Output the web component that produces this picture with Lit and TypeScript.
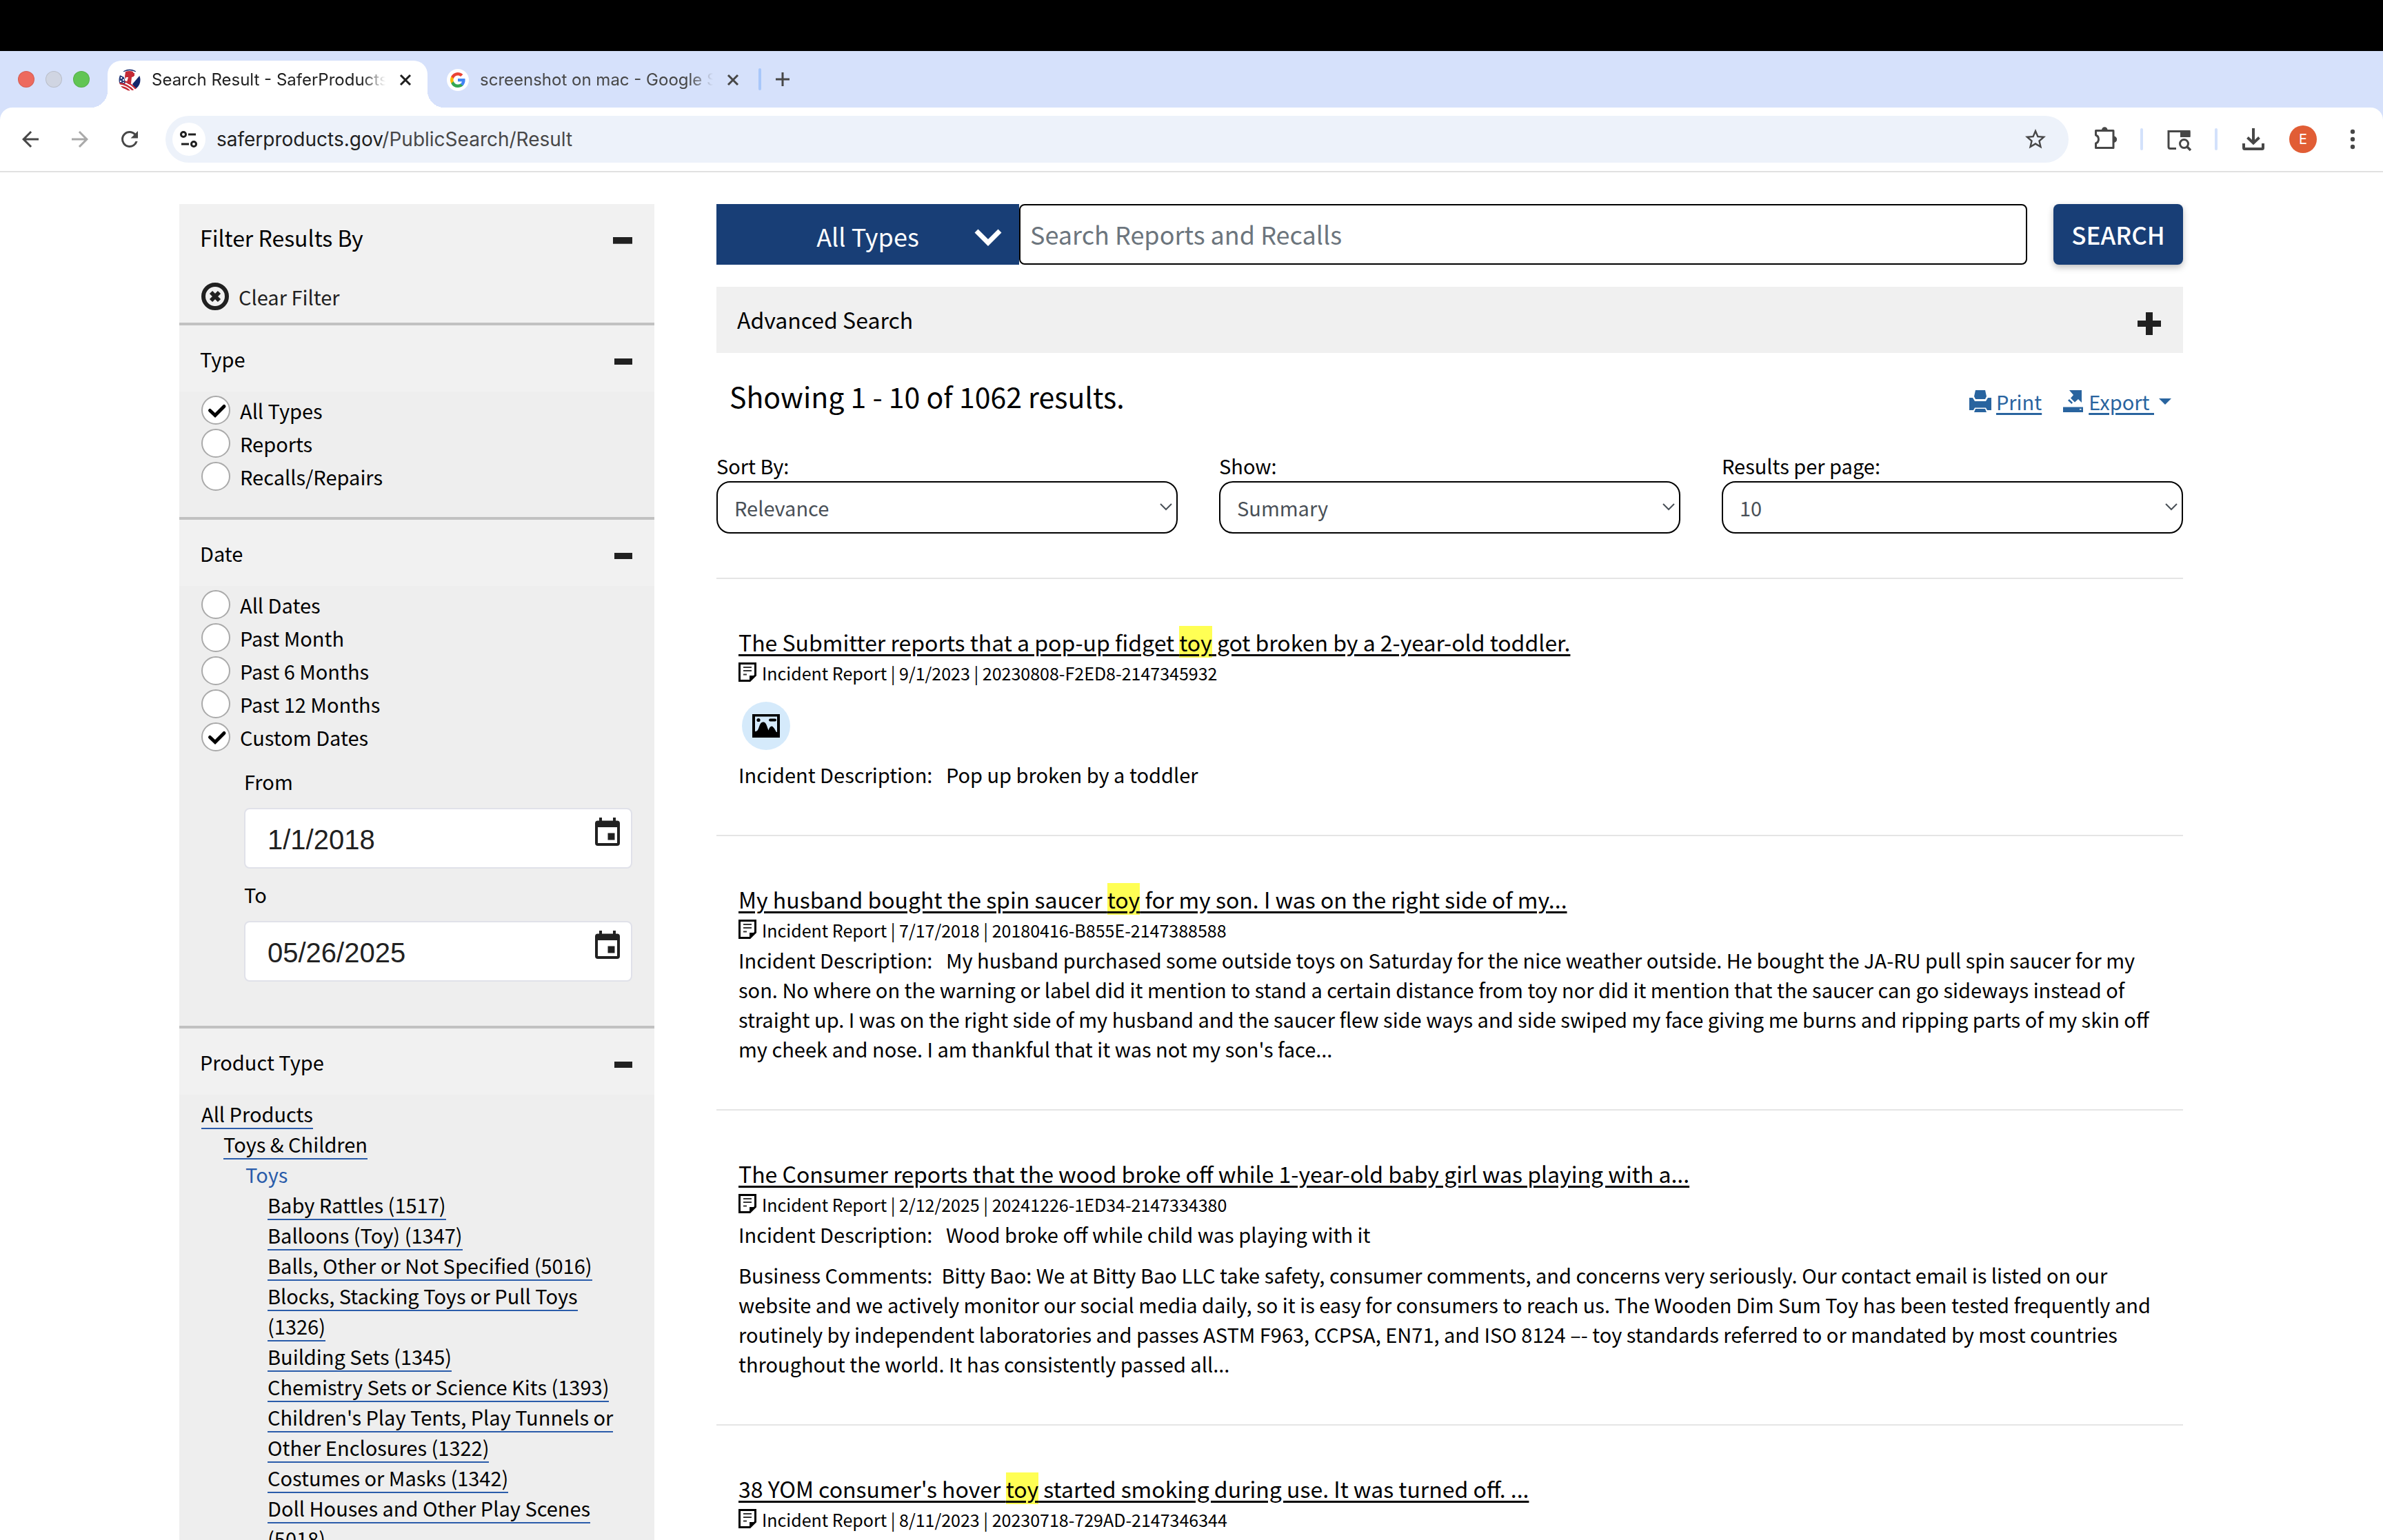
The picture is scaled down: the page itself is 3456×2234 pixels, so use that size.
import { LitElement, html, css, nothing } from "lit";
import { customElement, property, state } from "lit/decorators.js";

const FONT = css`"Noto Sans CJK JP", "Noto Sans CJK SC", "Noto Sans", sans-serif`;

const closeIcon = html`<svg class="close" viewBox="0 0 18 18" aria-hidden="true">
  <path d="M2 2l14 14M16 2L2 16" fill="none" stroke="currentColor" stroke-width="3" />
</svg>`;

@customElement("browser-chrome")
export class BrowserChrome extends LitElement {
  static styles = css`
    :host {
      display: block;
      font-family: Inter, Roboto, sans-serif;
      color: #1f1f1f;
    }
    button {
      border: 0;
      padding: 0;
      margin: 0;
      background: none;
      color: inherit;
      font: inherit;
      display: grid;
      place-items: center;
    }
    svg {
      display: block;
    }
    .menubar {
      height: 74px;
      background: #000;
    }
    .strip {
      display: flex;
      align-items: center;
      height: 82px;
      padding-left: 26px;
      background: #d6e1fb;
    }
    .lights {
      display: flex;
      gap: 16px;
      margin-right: 26px;
    }
    .light {
      width: 24px;
      height: 24px;
      border-radius: 50%;
      background: #ed6a5e;
      box-shadow: inset 0 0 0 1px #0000001c;
    }
    .light.min {
      background: #d0d5e2;
    }
    .light.max {
      background: #61c554;
    }
    .tab {
      display: flex;
      align-items: center;
      box-sizing: border-box;
      width: 464px;
      height: 68px;
      padding: 0 23px 12px 16px;
      align-self: flex-end;
      color: #474747;
    }
    .tab.other {
      padding-left: 28px;
      padding-right: 12px;
    }
    .tab.active {
      position: relative;
      background: #fff;
      border-radius: 20px 20px 0 0;
      color: #1f1f1f;
    }
    .tab.active::before,
    .tab.active::after {
      content: "";
      position: absolute;
      bottom: 0;
      width: 24px;
      height: 24px;
    }
    .tab.active::before {
      right: 100%;
      background: radial-gradient(circle at 0 0, transparent 24px, #fff 24px);
    }
    .tab.active::after {
      left: 100%;
      background: radial-gradient(circle at 100% 0, transparent 24px, #fff 24px);
    }
    .fav {
      width: 32px;
      height: 32px;
      flex: none;
      margin-right: 16px;
    }
    .title {
      flex: 1;
      min-width: 0;
      overflow: hidden;
      white-space: nowrap;
      font-size: 24px;
      line-height: 32px;
      margin-right: 20px;
      -webkit-mask-image: linear-gradient(to right, #000 90%, transparent);
      mask-image: linear-gradient(to right, #000 90%, transparent);
    }
    .close {
      width: 18px;
      height: 18px;
    }
    .sep {
      width: 4px;
      height: 32px;
      border-radius: 2px;
      background: #d3e1fb;
    }
    .sep.strong {
      background: #a8c7fa;
      margin: 0 20px 0 16px;
    }
    .plus {
      width: 22px;
      height: 22px;
    }
    .toolbar-back {
      background: #d6e1fb;
    }
    .toolbar {
      display: flex;
      align-items: center;
      gap: 34px;
      height: 92px;
      padding: 0 26px;
      background: #fff;
      border-radius: 18px 18px 0 0;
      border-bottom: 2px solid #e1e1e1;
      color: #474747;
    }
    .nav {
      display: flex;
      gap: 36px;
    }
    .icon {
      width: 36px;
      height: 36px;
    }
    .dim {
      color: #a9a9a9;
    }
    .omni {
      flex: 1;
      display: flex;
      align-items: center;
      height: 68px;
      box-sizing: border-box;
      padding: 0 30px 0 10px;
      border-radius: 34px;
      background: #edf2fa;
    }
    .site {
      width: 48px;
      height: 48px;
      border-radius: 50%;
      background: #fff;
      margin-right: 16px;
      color: #1f1f1f;
    }
    .url {
      flex: 1;
      font-size: 28px;
      line-height: 40px;
      color: #474747;
    }
    .host {
      color: #1f1f1f;
    }
    .avatar {
      width: 40px;
      height: 40px;
      border-radius: 50%;
      background: #e15d35;
      color: #fff;
      font-size: 20px;
    }
  `;

  render() {
    return html`
      <div class="menubar"></div>
      <div class="strip">
        <div class="lights">
          <span class="light"></span><span class="light min"></span><span class="light max"></span>
        </div>
        <div class="tab active">
          <svg class="fav" viewBox="0 0 32 32" aria-hidden="true">
            <clipPath id="seal"><circle cx="16" cy="16" r="15.5" /></clipPath>
            <g clip-path="url(#seal)">
              <path fill="#fff" d="M0 0h32v32H0z" />
              <path fill="#2b3f7c" d="M0 8l8 4 2 8-2 3-8-3z" />
              <path fill="#13276b" d="M20 22l12-14v24h-6z" />
              <path fill="none" stroke="#13276b" stroke-width="1.800" d="M7 3.500Q16-1 25 3.500" />
              <path fill="#c42a36" d="M10 4q6-2 11 0l1 7-3 1-1 9-4 1-2-3 2-7h-3l-1 3-1-4z" />
              <path fill="#c42a36" d="M18 5l5 1v4l-4 1z" />
              <path fill="none" stroke="#c42a36" stroke-width="2.400" d="M1 21q12 1 21 11M3 26q8 1 13 6" />
              <path fill="none" stroke="#c42a36" stroke-width="2.200" d="M9 18q9 3 18 13" />
              <path fill="#fff" d="M3 12h2v2H3zM6 15h2v2H6zM2 17h2v2H2zM6 19h2v1H6z" />
            </g>
          </svg>
          <span class="title">Search Result - SaferProducts.gov</span>
          <button aria-label="Close tab">${closeIcon}</button>
        </div>
        <div class="tab other">
          <svg class="fav" viewBox="0 0 32 32" aria-hidden="true">
            <circle cx="16" cy="16" r="16" fill="#fff" />
            <g transform="translate(4 4)">
              <path fill="#4285F4" d="M22.600 12.200c0-.8-.1-1.500-.2-2.200H12v4.300h5.900a5 5 0 0 1-2.200 3.300v2.800h3.600c2.100-2 3.300-4.800 3.300-8.200z" />
              <path fill="#34A853" d="M12 23c3 0 5.500-1 7.300-2.700l-3.600-2.800c-1 .7-2.200 1.100-3.700 1.100-2.900 0-5.300-1.900-6.200-4.500H2.200v2.800A11 11 0 0 0 12 23z" />
              <path fill="#FBBC05" d="M5.800 14.100a6.600 6.600 0 0 1 0-4.200V7H2.200a11 11 0 0 0 0 9.900z" />
              <path fill="#EA4335" d="M12 5.400c1.600 0 3.100.6 4.200 1.600l3.200-3.100A11 11 0 0 0 2.200 7l3.600 2.900C6.700 7.200 9.100 5.400 12 5.400z" />
            </g>
          </svg>
          <span class="title">screenshot on mac - Google Search</span>
          <button aria-label="Close tab">${closeIcon}</button>
        </div>
        <span class="sep strong"></span>
        <button aria-label="New tab">
          <svg class="plus" viewBox="0 0 22 22"><path d="M11 1v20M1 11h20" stroke="#474747" stroke-width="3" /></svg>
        </button>
      </div>
      <div class="toolbar-back">
        <div class="toolbar">
          <div class="nav">
            <button aria-label="Back">
              <svg class="icon" viewBox="0 0 24 24" fill="currentColor"><path d="M20 11H7.830l5.590-5.590L12 4l-8 8 8 8 1.410-1.410L7.830 13H20z" /></svg>
            </button>
            <button class="dim" aria-label="Forward">
              <svg class="icon" viewBox="0 0 24 24" fill="currentColor"><path d="M12 4l-1.410 1.410L16.170 11H4v2h12.170l-5.580 5.590L12 20l8-8z" /></svg>
            </button>
            <button aria-label="Reload">
              <svg class="icon" viewBox="0 0 24 24" fill="currentColor"><path d="M17.650 6.350A7.950 7.950 0 0 0 12 4a8 8 0 1 0 7.730 10h-2.080A6 6 0 1 1 12 6c1.660 0 3.140.69 4.220 1.780L13 11h7V4z" /></svg>
            </button>
          </div>
          <div class="omni">
            <button class="site" aria-label="Site information">
              <svg width="30" height="30" viewBox="0 0 30 30" fill="none" stroke="currentColor" stroke-width="3">
                <circle cx="7" cy="8" r="3.500" /><path d="M14 8h11M4 22h11" /><circle cx="22" cy="22" r="3.500" />
              </svg>
            </button>
            <span class="url"><span class="host">saferproducts.gov</span>/PublicSearch/Result</span>
            <button aria-label="Bookmark">
              <svg class="icon" viewBox="0 0 24 24" fill="currentColor"><path d="M22 9.240l-7.190-.62L12 2 9.190 8.630 2 9.240l5.460 4.730L5.820 21 12 17.270 18.180 21l-1.630-7.030zM12 15.400l-3.760 2.270 1-4.280-3.320-2.880 4.380-.38L12 6.100l1.710 4.040 4.380.38-3.320 2.880 1 4.280z" /></svg>
            </button>
          </div>
          <button aria-label="Extensions">
            <svg class="icon" viewBox="0 0 36 36">
              <path fill="none" stroke="currentColor" stroke-width="3" stroke-linejoin="round" d="M5.500 5.500H31v25H5.500v-6.500a6.500 6.500 0 0 0 0-12z" />
              <path fill="currentColor" d="M14 4.500a4.300 4.300 0 0 1 8.600 0zM31.500 13.500a4.700 4.700 0 0 1 0 9.400z" />
            </svg>
          </button>
          <span class="sep"></span>
          <button aria-label="Search tabs">
            <svg class="icon" viewBox="0 0 36 36" fill="none" stroke="currentColor" stroke-width="3">
              <path d="M14 31.500H5.500a2.500 2.500 0 0 1-2.500-2.500V6.500h30V14" />
              <path fill="currentColor" stroke="none" d="M20 5h12a2.500 2.500 0 0 1 2.500 2.500V15H20z" />
              <circle cx="25.500" cy="24.500" r="6" /><path d="M30 29l5 5" stroke-width="3.500" />
            </svg>
          </button>
          <span class="sep"></span>
          <button aria-label="Downloads">
            <svg class="icon" viewBox="0 0 36 36" fill="none" stroke="currentColor" stroke-width="4">
              <path d="M18 2v21M9.500 15.500l8.500 8 8.500-8M4 24v6.500a1.500 1.500 0 0 0 1.500 1.500h25a1.500 1.500 0 0 0 1.500-1.500V24" />
            </svg>
          </button>
          <button class="avatar" aria-label="Profile">E</button>
          <button aria-label="Menu">
            <svg class="icon" viewBox="0 0 36 36" fill="currentColor">
              <circle cx="18" cy="7" r="3.200" /><circle cx="18" cy="18" r="3.200" /><circle cx="18" cy="29" r="3.200" />
            </svg>
          </button>
        </div>
      </div>
    `;
  }
}

interface Choice {
  id: string;
  label: string;
}

const TYPES: Choice[] = [
  { id: "all", label: "All Types" },
  { id: "reports", label: "Reports" },
  { id: "recalls", label: "Recalls/Repairs" },
];

const DATES: Choice[] = [
  { id: "all", label: "All Dates" },
  { id: "m1", label: "Past Month" },
  { id: "m6", label: "Past 6 Months" },
  { id: "m12", label: "Past 12 Months" },
  { id: "custom", label: "Custom Dates" },
];

const PRODUCTS = [
  "Baby Rattles (1517)",
  "Balloons (Toy) (1347)",
  "Balls, Other or Not Specified (5016)",
  "Blocks, Stacking Toys or Pull Toys (1326)",
  "Building Sets (1345)",
  "Chemistry Sets or Science Kits (1393)",
  "Children's Play Tents, Play Tunnels or Other Enclosures (1322)",
  "Costumes or Masks (1342)",
  "Doll Houses and Other Play Scenes (5018)",
];

const minusIcon = html`<svg class="minus" viewBox="0 0 26 18" aria-hidden="true">
  <path fill="#212121" d="M0 9h26v9H0z" />
</svg>`;

@customElement("filter-panel")
export class FilterPanel extends LitElement {
  static styles = css`
    :host {
      display: block;
      background: #eee;
      font-family: ${FONT};
      font-size: 29px;
      line-height: 44px;
      color: #000;
    }
    h2,
    h3,
    ul {
      margin: 0;
      padding: 0;
      font: inherit;
      list-style: none;
    }
    button {
      border: 0;
      padding: 0;
      margin: 0;
      background: none;
      color: inherit;
      font: inherit;
    }
    svg {
      display: block;
    }
    section {
      border-bottom: 4px solid #c1c1c1;
    }
    .top {
      background: #f1f1f1;
      padding: 24px 32px 16px;
    }
    .head {
      display: flex;
      align-items: center;
      justify-content: space-between;
    }
    .top .head {
      margin-left: -2px;
    }
    .top h2 {
      font-size: 32px;
      line-height: 48px;
    }
    .top .minus {
      width: 28px;
      height: 20px;
    }
    .clear {
      display: flex;
      align-items: center;
      gap: 14px;
      margin-top: 40px;
      color: #212121;
    }
    .clear svg {
      width: 40px;
      height: 40px;
    }
    .group {
      height: 96px;
      padding: 0 32px 0 30px;
      background: #f1f1f1;
    }
    .minus {
      width: 26px;
      height: 18px;
    }
    .choices {
      padding: 3px 32px 35px;
    }
    .choice {
      display: flex;
      align-items: center;
      gap: 14px;
      height: 48px;
    }
    .mark {
      display: grid;
      place-items: center;
    }
    .mark > * {
      grid-area: 1 / 1;
    }
    .mark svg {
      width: 42px;
      height: 42px;
      pointer-events: none;
    }
    input[type="radio"] {
      appearance: none;
      box-sizing: border-box;
      width: 42px;
      height: 42px;
      margin: 0;
      border: 2px solid #aaa;
      border-radius: 50%;
      background: #fff;
    }
    .choices.dated {
      padding-bottom: 64px;
    }
    .dates {
      display: grid;
      grid-template-columns: minmax(0, 1fr);
      gap: 17px;
      margin: 20px 0 0 62px;
    }
    .date {
      display: grid;
      grid-template-columns: minmax(0, 1fr);
      gap: 19px;
    }
    .date label {
      line-height: 40px;
    }
    .field {
      display: flex;
      align-items: flex-start;
      box-sizing: border-box;
      height: 88px;
      padding: 12px 16px 0 32px;
      border: 2px solid #e0e1e9;
      border-radius: 8px;
      background: #fff;
    }
    .field input {
      flex: 1;
      min-width: 0;
      height: 64px;
      padding: 0;
      border: 0;
      background: none;
      font: 40px/64px "Liberation Sans", Arial, sans-serif;
      color: #212121;
    }
    .field svg {
      width: 36px;
      height: 42px;
    }
    .tree {
      padding: 5px 32px 0;
    }
    .tree ul {
      padding-left: 32px;
    }
    a {
      color: inherit;
      text-decoration: none;
      border-bottom: 2px solid #2a5caa;
    }
    .here {
      color: #2a5caa;
    }
  `;

  @state() private type = "all";
  @state() private date = "custom";

  private choices(name: string, list: Choice[], current: string, pick: (id: string) => void) {
    return list.map(
      (c) => html`<div class="choice">
        <span class="mark">
          <input type="radio" id=${name + c.id} name=${name} .checked=${c.id === current} @change=${() => pick(c.id)} />
          ${c.id === current
            ? html`<svg viewBox="0 0 42 42" aria-hidden="true">
                <path d="M12.500 21.500l7.500 7 13-13" fill="none" stroke="#000" stroke-width="5" stroke-linecap="round" />
              </svg>`
            : nothing}
        </span>
        <label for=${name + c.id}>${c.label}</label>
      </div>`,
    );
  }

  private group(title: string) {
    return html`<div class="head group">
      <h3>${title}</h3>
      <button aria-label="Collapse ${title}">${minusIcon}</button>
    </div>`;
  }

  private dateField(id: string, label: string, value: string) {
    return html`<div class="date">
      <label for=${id}>${label}</label>
      <div class="field">
        <input id=${id} type="text" .value=${value} />
        <button aria-label="Choose date">
          <svg viewBox="0 0 36 42" fill="#212121">
            <path fill-rule="evenodd" d="M6 0h4v4.500h16V0h4v4.500h2a4 4 0 0 1 4 4V37a4 4 0 0 1-4 4H4a4 4 0 0 1-4-4V8.500a4 4 0 0 1 4-4h2zM4 14v23h28V14z" />
            <path d="M18.500 22.500h10v10h-10z" />
          </svg>
        </button>
      </div>
    </div>`;
  }

  render() {
    return html`
      <section class="top">
        <div class="head">
          <h2>Filter Results By</h2>
          <button aria-label="Collapse filters">${minusIcon}</button>
        </div>
        <button class="clear">
          <svg viewBox="0 0 40 40" aria-hidden="true">
            <circle cx="20" cy="20" r="17" fill="none" stroke="#212121" stroke-width="6" />
            <path d="M14 14l12 12M26 14L14 26" stroke="#212121" stroke-width="6" />
          </svg>
          Clear Filter
        </button>
      </section>
      <section>
        ${this.group("Type")}
        <div class="choices">${this.choices("type", TYPES, this.type, (id) => (this.type = id))}</div>
      </section>
      <section>
        ${this.group("Date")}
        <div class="choices dated">
          ${this.choices("date", DATES, this.date, (id) => (this.date = id))}
          <div class="dates">
            ${this.dateField("from", "From", "1/1/2018")} ${this.dateField("to", "To", "05/26/2025")}
          </div>
        </div>
      </section>
      <section>
        ${this.group("Product Type")}
        <div class="tree">
          <a href="#all">All Products</a>
          <ul>
            <li>
              <a href="#children">Toys &amp; Children</a>
              <ul>
                <li>
                  <span class="here">Toys</span>
                  <ul>
                    ${PRODUCTS.map((p) => html`<li><a href="#product">${p}</a></li>`)}
                  </ul>
                </li>
              </ul>
            </li>
          </ul>
        </div>
      </section>
    `;
  }
}

interface Result {
  before: string;
  hit?: string;
  after?: string;
  meta: string;
  photo?: boolean;
  description?: string;
  comments?: string;
}

const RESULTS: Result[] = [
  {
    before: "The Submitter reports that a pop-up fidget ",
    hit: "toy",
    after: " got broken by a 2-year-old toddler.",
    meta: "Incident Report | 9/1/2023 | 20230808-F2ED8-2147345932",
    photo: true,
    description: "Pop up broken by a toddler",
  },
  {
    before: "My husband bought the spin saucer ",
    hit: "toy",
    after: " for my son. I was on the right side of my...",
    meta: "Incident Report | 7/17/2018 | 20180416-B855E-2147388588",
    description:
      "My husband purchased some outside toys on Saturday for the nice weather outside. He bought the JA-RU pull spin saucer for my son. No where on the warning or label did it mention to stand a certain distance from toy nor did it mention that the saucer can go sideways instead of straight up. I was on the right side of my husband and the saucer flew side ways and side swiped my face giving me burns and ripping parts of my skin off my cheek and nose. I am thankful that it was not my son's face...",
  },
  {
    before: "The Consumer reports that the wood broke off while 1-year-old baby girl was playing with a...",
    meta: "Incident Report | 2/12/2025 | 20241226-1ED34-2147334380",
    description: "Wood broke off while child was playing with it",
    comments:
      "Bitty Bao: We at Bitty Bao LLC take safety, consumer comments, and concerns very seriously. Our contact email is listed on our website and we actively monitor our social media daily, so it is easy for consumers to reach us. The Wooden Dim Sum Toy has been tested frequently and routinely by independent laboratories and passes ASTM F963, CCPSA, EN71, and ISO 8124 –- toy standards referred to or mandated by most countries throughout the world. It has consistently passed all...",
  },
  {
    before: "38 YOM consumer's hover ",
    hit: "toy",
    after: " started smoking during use. It was turned off. ...",
    meta: "Incident Report | 8/11/2023 | 20230718-729AD-2147346344",
  },
];

@customElement("result-item")
export class ResultItem extends LitElement {
  static styles = css`
    :host {
      display: block;
      padding: 67px 32px 66px;
      border-top: 2px solid #e5e5e5;
    }
    h3 {
      margin: 0;
      font-weight: 400;
      font-size: 32px;
      line-height: 48px;
    }
    a {
      color: #000;
      text-decoration-thickness: 3px;
      text-underline-offset: 4px;
    }
    mark {
      background: #ffff54;
      color: inherit;
    }
    .meta {
      display: flex;
      align-items: center;
      gap: 8px;
      font-size: 25px;
      line-height: 43px;
    }
    .meta svg {
      width: 26px;
      height: 36px;
    }
    svg {
      display: block;
    }
    .photo {
      display: grid;
      place-items: center;
      width: 70px;
      height: 70px;
      margin: 20px 5px 14px;
      border: 0;
      padding: 0;
      border-radius: 50%;
      background: #d5eafb;
    }
    p {
      margin: 0;
      font-size: 29px;
      line-height: 43px;
    }
    p + p {
      margin-top: 16px;
    }
  `;

  @property({ attribute: false }) item!: Result;

  render() {
    const r = this.item;
    return html`
      <h3><a href="#report">${r.before}${r.hit ? html`<mark>${r.hit}</mark>` : nothing}${r.after ?? nothing}</a></h3>
      <div class="meta">
        <svg viewBox="0 0 26 36" aria-hidden="true">
          <path fill="#fff" stroke="#000" stroke-width="3" d="M1.500 3.500h23v17l-8 8h-15z" />
          <path d="M16 30v-9h10z" />
          <path d="M7 9h12M7 14h12M7 19.500h5" stroke="#333" stroke-width="2" fill="none" />
        </svg>
        <span>${r.meta}</span>
      </div>
      ${r.photo
        ? html`<button class="photo" aria-label="View photo">
            <svg width="40" height="34" viewBox="0 0 40 34">
              <path fill-rule="evenodd" d="M0 0h40v34H0zM4 3.500V25c3 0 4-1 6-7s4-6.500 6-6.500 4 1.500 6 8l1.500 4c1-4 3-6 4.500-6s3.500 2 5 5 2 3.500 3 3.500V3.500z" />
              <circle cx="9" cy="8.500" r="2.600" />
              <rect x="24" y="6.500" width="11" height="4" rx="2" />
            </svg>
          </button>`
        : nothing}
      ${r.description ? html`<p>Incident Description:&nbsp;&nbsp; ${r.description}</p>` : nothing}
      ${r.comments ? html`<p>Business Comments:&nbsp; ${r.comments}</p>` : nothing}
    `;
  }
}

const SELECTS: { id: string; label: string; options: string[] }[] = [
  { id: "sort", label: "Sort By:", options: ["Relevance", "Date"] },
  { id: "show", label: "Show:", options: ["Summary", "Details"] },
  { id: "per", label: "Results per page:", options: ["10", "25", "50"] },
];

@customElement("search-results")
export class SearchResults extends LitElement {
  static styles = css`
    :host {
      display: block;
      font-family: ${FONT};
      font-size: 29px;
      color: #000;
    }
    button,
    select,
    input {
      font: inherit;
      margin: 0;
      border: 0;
      padding: 0;
      background: none;
      color: inherit;
    }
    svg {
      display: block;
    }
    .search {
      display: flex;
      height: 88px;
      font-size: 36px;
    }
    .kind {
      display: grid;
      grid-template-columns: 40px 1fr 40px;
      align-items: center;
      width: 439px;
      padding: 4px 25px 0;
      box-sizing: border-box;
      background: #183e76;
      color: #fff;
    }
    .kind span {
      grid-column: 2;
    }
    .query {
      flex: 1;
      min-width: 0;
      box-sizing: border-box;
      padding: 0 14px 2px;
      border: 2px solid #000;
      border-radius: 8px;
      background: #fff;
    }
    .query::placeholder {
      color: #6c757d;
      opacity: 1;
    }
    .go {
      width: 188px;
      margin-left: 38px;
      padding-bottom: 2px;
      border-radius: 8px;
      background: #183e76;
      color: #fff;
      font-size: 35px;
      font-weight: 500;
      box-shadow: 0 4px 10px #00000040;
    }
    .advanced {
      display: flex;
      align-items: center;
      justify-content: space-between;
      width: 100%;
      height: 96px;
      margin-top: 32px;
      padding: 0 32px 2px 30px;
      box-sizing: border-box;
      background: #f0f0f0;
      font-size: 32px;
    }
    .summary {
      display: flex;
      align-items: flex-end;
      justify-content: space-between;
      margin: 32px 0 49px;
      padding: 0 17px 0 19px;
    }
    h1 {
      margin: 0;
      font-size: 41px;
      font-weight: 400;
      line-height: 60px;
    }
    .tools {
      display: flex;
      align-items: center;
      gap: 7px;
      line-height: 44px;
      color: #29649f;
    }
    .tools a {
      color: inherit;
      text-decoration-thickness: 3px;
      text-underline-offset: 4px;
      white-space: pre;
    }
    .tools .next {
      margin-left: 24px;
    }
    .selects {
      display: grid;
      grid-template-columns: repeat(3, minmax(0, 1fr));
      gap: 60px;
      margin-bottom: 64px;
    }
    .pick {
      display: grid;
      grid-template-rows: 45px 76px;
    }
    .pick label {
      line-height: 45px;
    }
    .pick select {
      grid-area: 2 / 1;
      appearance: none;
      box-sizing: border-box;
      padding: 0 24px;
      border: 2px solid #000;
      border-radius: 20px;
      background: #fff;
      color: #495057;
    }
    .pick svg {
      grid-area: 2 / 1;
      align-self: center;
      justify-self: end;
      margin-right: 8px;
      pointer-events: none;
    }
  `;

  render() {
    return html`
      <form class="search" @submit=${(e: Event) => e.preventDefault()}>
        <button type="button" class="kind">
          <span>All Types</span>
          <svg width="40" height="32" viewBox="0 0 40 32" aria-hidden="true">
            <path d="M3 9l17 17L37 9" fill="none" stroke="#fff" stroke-width="7" />
          </svg>
        </button>
        <input class="query" type="text" placeholder="Search Reports and Recalls" aria-label="Search Reports and Recalls" />
        <button class="go">SEARCH</button>
      </form>
      <button class="advanced">
        <span>Advanced Search</span>
        <svg width="34" height="46" viewBox="0 0 34 46" aria-hidden="true">
          <path fill="#212121" d="M12 13h10v12h12v9H22v12H12V34H0v-9h12z" />
        </svg>
      </button>
      <div class="summary">
        <h1>Showing 1 - 10 of 1062 results.</h1>
        <div class="tools">
          <svg width="32" height="32" viewBox="0 0 32 32" fill="currentColor" aria-hidden="true">
            <path d="M9 0h14l2 9-2 4H9l-2-4z" />
            <path d="M0 11h5l3 5h16l3-5h5v18h-6l-2-3.500H8L6 29H0z" />
            <path d="M9 27h14l2 5H7z" />
          </svg>
          <a href="#print">Print</a>
          <svg class="next" width="30" height="32" viewBox="0 0 30 32" fill="currentColor" aria-hidden="true">
            <path d="M0 24.500h29V32H0z" />
            <path d="M9 0h18v18l-5-5-5 4.500-6-6L15 7z" />
            <path d="M9 13l5 5-1.500 2-5.500-5z" />
            <path fill="#fff" d="M24 27h2.500v1.500H24z" />
          </svg>
          <a href="#export">Export </a>
          <svg width="18" height="20" viewBox="0 0 18 20" fill="currentColor" aria-hidden="true"><path d="M0 6h18l-9 9z" /></svg>
        </div>
      </div>
      <div class="selects">
        ${SELECTS.map(
          (s) => html`<div class="pick">
            <label for=${s.id}>${s.label}</label>
            <select id=${s.id}>
              ${s.options.map((o) => html`<option>${o}</option>`)}
            </select>
            <svg width="18" height="14" viewBox="0 0 18 14" aria-hidden="true">
              <path d="M1 2l8 8 8-8" fill="none" stroke="#495057" stroke-width="2" />
            </svg>
          </div>`,
        )}
      </div>
      ${RESULTS.map((r) => html`<result-item .item=${r}></result-item>`)}
    `;
  }
}

@customElement("app-root")
export class AppRoot extends LitElement {
  static styles = css`
    :host {
      display: flex;
      flex-direction: column;
      height: 100vh;
      overflow: hidden;
      background: #fff;
    }
    browser-chrome {
      flex: none;
    }
    .page {
      flex: 1;
      min-height: 0;
      overflow: hidden;
      display: grid;
      grid-template-columns: minmax(0, 689fr) minmax(0, 2127fr);
      align-items: start;
      column-gap: 90px;
      padding: 46px 290px 0 260px;
    }
  `;

  render() {
    return html`
      <browser-chrome></browser-chrome>
      <main class="page">
        <filter-panel></filter-panel>
        <search-results></search-results>
      </main>
    `;
  }
}
